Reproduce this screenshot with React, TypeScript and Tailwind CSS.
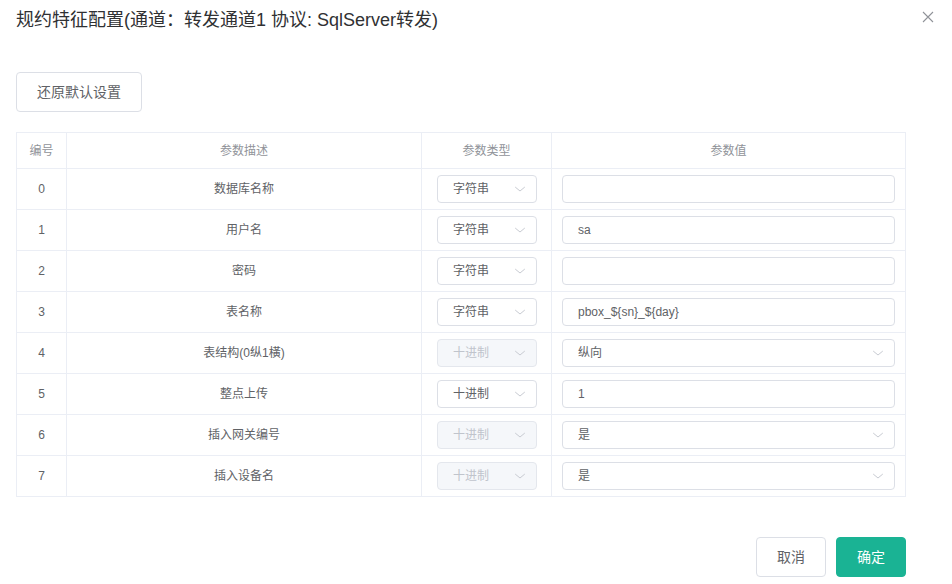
import React from "react";

type Row = {
  id: number;
  desc: string;
  type: string;
  typeDisabled: boolean;
  value: string;
  valueKind: "input" | "select";
};

const rows: Row[] = [
  { id: 0, desc: "数据库名称", type: "字符串", typeDisabled: false, value: "", valueKind: "input" },
  { id: 1, desc: "用户名", type: "字符串", typeDisabled: false, value: "sa", valueKind: "input" },
  { id: 2, desc: "密码", type: "字符串", typeDisabled: false, value: "", valueKind: "input" },
  { id: 3, desc: "表名称", type: "字符串", typeDisabled: false, value: "pbox_${sn}_${day}", valueKind: "input" },
  { id: 4, desc: "表结构(0纵1橫)", type: "十进制", typeDisabled: true, value: "纵向", valueKind: "select" },
  { id: 5, desc: "整点上传", type: "十进制", typeDisabled: false, value: "1", valueKind: "input" },
  { id: 6, desc: "插入网关编号", type: "十进制", typeDisabled: true, value: "是", valueKind: "select" },
  { id: 7, desc: "插入设备名", type: "十进制", typeDisabled: true, value: "是", valueKind: "select" },
];

function Chevron() {
  return (
    <svg width="12" height="12" viewBox="0 0 12 12" fill="none" className="shrink-0">
      <path d="M1.5 4.3 L6 8 L10.5 4.3" stroke="#c8cbd2" strokeWidth="1" strokeLinecap="round" strokeLinejoin="round" />
    </svg>
  );
}

function TypeSelect({ label, disabled }: { label: string; disabled: boolean }) {
  return (
    <div
      className={
        disabled
          ? "mx-auto flex h-[28px] w-[100px] items-center justify-between rounded-[4px] border border-[#e4e7ed] bg-[#f5f7fa] pl-[15px] pr-[10px] text-[12px] text-[#c0c4cc]"
          : "mx-auto flex h-[28px] w-[100px] items-center justify-between rounded-[4px] border border-[#dcdfe6] bg-white pl-[15px] pr-[10px] text-[12px] text-[#606266]"
      }
    >
      <span>{label}</span>
      <Chevron />
    </div>
  );
}

function ValueField({ row }: { row: Row }) {
  return (
    <div className="flex h-[28px] w-full items-center justify-between rounded-[4px] border border-[#dcdfe6] bg-white pl-[15px] pr-[10px] text-[12px] text-[#606266]">
      <span>{row.value}</span>
      {row.valueKind === "select" ? <Chevron /> : null}
    </div>
  );
}

export default function App() {
  return (
    <div
      className="relative h-[584px] w-[952px] overflow-hidden bg-white text-[#606266]"
      style={{ fontFamily: '"Liberation Sans", Arial, "Noto Sans CJK SC", sans-serif' }}
    >
      <div className="flex h-[52px] items-start px-4 pt-[8px]">
        <h1 className="text-[18px] leading-[24px] font-normal text-[#303133]">
          规约特征配置(通道：转发通道1 协议: SqlServer转发)
        </h1>
      </div>
      <button className="absolute right-[18px] top-[11px] flex h-[12px] w-[12px] items-center justify-center">
        <svg width="12" height="12" viewBox="0 0 12 12" fill="none">
          <path d="M1 1 L11 11 M11 1 L1 11" stroke="#909399" strokeWidth="1.1" />
        </svg>
      </button>

      <div className="px-4">
        <div className="pt-[20px]">
          <button className="h-[40px] w-[126px] rounded-[4px] border border-[#dcdfe6] bg-white text-[14px] text-[#606266]">
            还原默认设置
          </button>
        </div>

        <table className="mt-[20px] w-[889px] table-fixed border-collapse border border-[#ebeef5] text-[12px]">
          <colgroup>
            <col className="w-[50px]" />
            <col className="w-[355px]" />
            <col className="w-[130px]" />
            <col className="w-[354px]" />
          </colgroup>
          <thead>
            <tr className="h-[36px] text-[#909399]">
              <th className="border border-[#ebeef5] font-normal">编号</th>
              <th className="border border-[#ebeef5] font-normal">参数描述</th>
              <th className="border border-[#ebeef5] font-normal">参数类型</th>
              <th className="border border-[#ebeef5] font-normal">参数值</th>
            </tr>
          </thead>
          <tbody>
            {rows.map((r) => (
              <tr key={r.id} className="h-[41px]">
                <td className="border border-[#ebeef5] text-center">{r.id}</td>
                <td className="border border-[#ebeef5] text-center">{r.desc}</td>
                <td className="border border-[#ebeef5] px-[15px]">
                  <TypeSelect label={r.type} disabled={r.typeDisabled} />
                </td>
                <td className="border border-[#ebeef5] px-[10px]">
                  <ValueField row={r} />
                </td>
              </tr>
            ))}
          </tbody>
        </table>

        <div className="mt-[40px] flex w-[890px] justify-end gap-[10px]">
          <button className="h-[40px] w-[70px] rounded-[4px] border border-[#dcdfe6] bg-white text-[14px] text-[#606266]">
            取消
          </button>
          <button className="h-[40px] w-[70px] rounded-[4px] border border-[#1ab394] bg-[#1ab394] text-[14px] text-white">
            确定
          </button>
        </div>
      </div>
    </div>
  );
}
